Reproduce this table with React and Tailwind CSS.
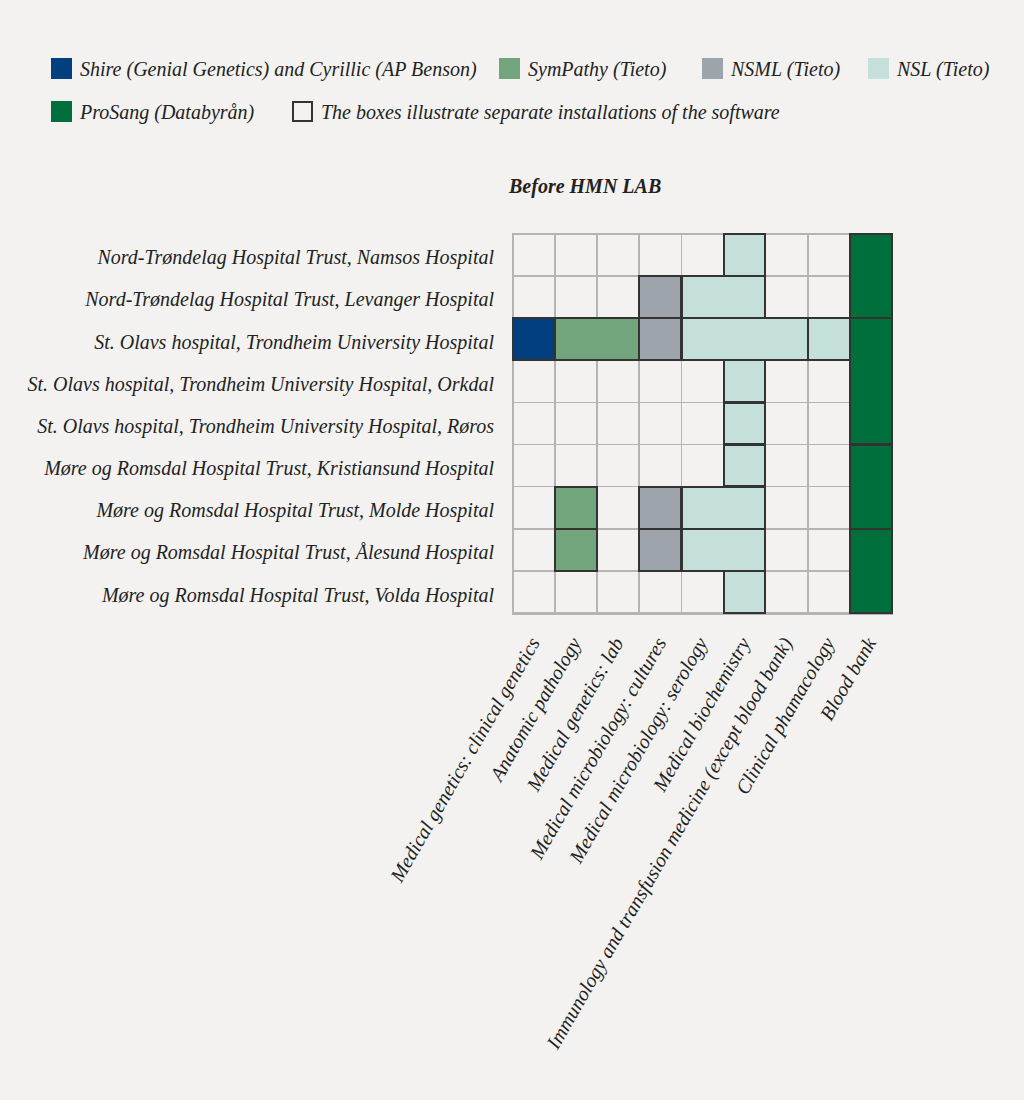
const rows = [
  'Nord-Trøndelag Hospital Trust, Namsos Hospital',
  'Nord-Trøndelag Hospital Trust, Levanger Hospital',
  'St. Olavs hospital, Trondheim University Hospital',
  'St. Olavs hospital, Trondheim University Hospital, Orkdal',
  'St. Olavs hospital, Trondheim University Hospital, Røros',
  'Møre og Romsdal Hospital Trust, Kristiansund Hospital',
  'Møre og Romsdal Hospital Trust, Molde Hospital',
  'Møre og Romsdal Hospital Trust, Ålesund Hospital',
  'Møre og Romsdal Hospital Trust, Volda Hospital',
];

const columns = [
  'Medical genetics: clinical genetics',
  'Anatomic pathology',
  'Medical genetics: lab',
  'Medical microbiology: cultures',
  'Medical microbiology: serology',
  'Medical biochemistry',
  'Immunology and transfusion medicine (except blood bank)',
  'Clinical phamacology',
  'Blood bank',
];

const SHIRE = 'bg-[#023f7e]';
const SYM = 'bg-[#73a57c]';
const NSML = 'bg-[#9ea4ac]';
const NSL = 'bg-[#c5dfda]';
const PRO = 'bg-[#006f3b]';

// each block is one installation
const blocks = [
  ['col-start-6 row-start-1', NSL],
  ['col-start-9 row-start-1 row-span-2', PRO],
  ['col-start-4 row-start-2', NSML],
  ['col-start-5 row-start-2 col-span-2', NSL],
  ['col-start-1 row-start-3', SHIRE],
  ['col-start-2 row-start-3 col-span-2', SYM],
  ['col-start-4 row-start-3', NSML],
  ['col-start-5 row-start-3 col-span-3', NSL],
  ['col-start-8 row-start-3', NSL],
  ['col-start-9 row-start-3 row-span-3', PRO],
  ['col-start-6 row-start-4', NSL],
  ['col-start-6 row-start-5', NSL],
  ['col-start-6 row-start-6', NSL],
  ['col-start-9 row-start-6 row-span-2', PRO],
  ['col-start-2 row-start-7', SYM],
  ['col-start-4 row-start-7', NSML],
  ['col-start-5 row-start-7 col-span-2', NSL],
  ['col-start-2 row-start-8', SYM],
  ['col-start-4 row-start-8', NSML],
  ['col-start-5 row-start-8 col-span-2', NSL],
  ['col-start-9 row-start-8 row-span-2', PRO],
  ['col-start-6 row-start-9', NSL],
];

function Swatch({ className }) {
  return <span className={`w-[21px] h-[21px] shrink-0 ${className}`} />;
}

function LegendItem({ swatch, label, width }) {
  return (
    <div className={`flex items-center gap-[8px] ${width}`}>
      <Swatch className={swatch} />
      <span className="whitespace-nowrap">{label}</span>
    </div>
  );
}

export default function App() {
  return (
    <div className="min-h-[1100px] bg-[#f3f2f0] text-[#222] font-['Liberation_Serif',serif] italic text-[20px] leading-[20px]">
      {/* Legend */}
      <div className="pt-[58px] pl-[51px]">
        <div className="flex items-center h-[21px]">
          <LegendItem swatch={SHIRE} label="Shire (Genial Genetics) and Cyrillic (AP Benson)" width="w-[448px]" />
          <LegendItem swatch={SYM} label="SymPathy (Tieto)" width="w-[203px]" />
          <LegendItem swatch={NSML} label="NSML (Tieto)" width="w-[166px]" />
          <LegendItem swatch={NSL} label="NSL (Tieto)" width="w-auto" />
        </div>
        <div className="flex items-center h-[21px] mt-[22px]">
          <LegendItem swatch={PRO} label="ProSang (Databyrån)" width="w-[241px]" />
          <LegendItem swatch="border-2 border-[#333]" label="The boxes illustrate separate installations of the software" width="w-auto" />
        </div>
      </div>

      <h2 className="mt-[54px] ml-[509px] font-bold">Before HMN LAB</h2>

      {/* Matrix */}
      <div className="flex mt-[37px]">
        <div className="w-[494px] grid grid-rows-[repeat(9,40.67px)] gap-y-[1.5px] pt-[4px]">
          {rows.map((r) => (
            <div key={r} className="flex items-center justify-end whitespace-nowrap">
              {r}
            </div>
          ))}
        </div>
        <div className="ml-[18px] grid grid-cols-[repeat(9,40.67px)] grid-rows-[repeat(9,40.67px)] gap-[1.5px] p-[1.5px] bg-[#b4b4b4]">
          {Array.from({ length: 48 }).map((_, i) => (
            <div key={i} className="bg-[#f3f2f0]" />
          ))}
          {blocks.map(([pos, color], i) => (
            <div key={'b' + i} className={`${pos} ${color} border-2 border-[#333] -m-[1.5px]`} />
          ))}
        </div>
      </div>

      {/* Column labels */}
      <div className="ml-[512px] mt-[24px] h-[460px] grid grid-cols-[repeat(9,40.67px)] gap-x-[1.5px] px-[1.5px]">
        {columns.map((c) => (
          <div key={c} className="relative h-0">
            <span className="absolute right-1/2 -top-[10px] leading-[20px] whitespace-nowrap origin-right -rotate-60">
              {c}
            </span>
          </div>
        ))}
      </div>
    </div>
  );
}
